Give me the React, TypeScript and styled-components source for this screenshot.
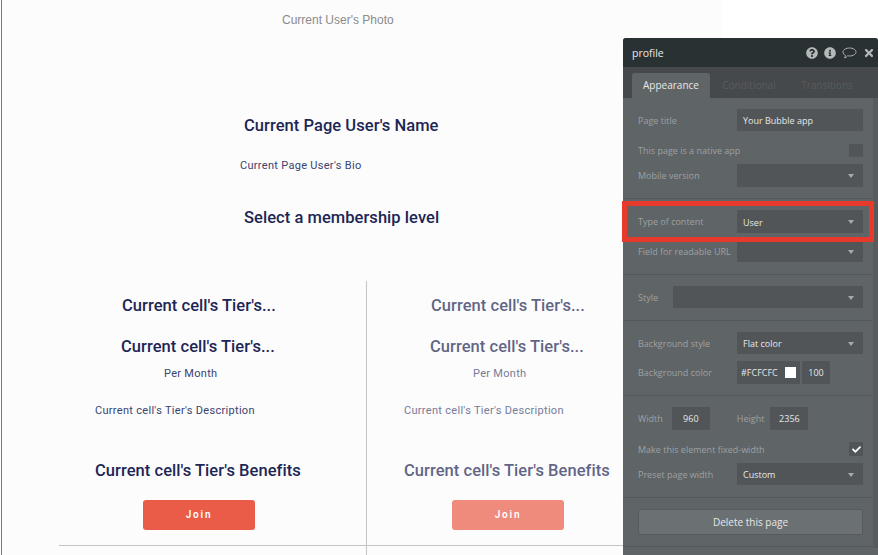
import React from "react";
import styled, { createGlobalStyle } from "styled-components";
import { FaQuestionCircle, FaInfoCircle, FaTimes, FaCheck } from "react-icons/fa";

const Global = createGlobalStyle`
  html, body { margin: 0; padding: 0; background: #fff; overflow: hidden; }
  #root { width: 878px; height: 555px; }
  * { box-sizing: border-box; }
`;

const Stage = styled.div`
  position: relative;
  width: 878px;
  height: 555px;
  overflow: hidden;
  background: #fff;
`;

const PageCanvas = styled.div`
  width: 721px;
  height: 555px;
  margin-left: 1px;
  background: #fcfcfc;
  border-left: 1px solid #3f82cf;
  font-family: "Roboto", "Liberation Sans", sans-serif;
  color: #1c2655;
`;

const Photo = styled.div`
  padding: 13px 0 0 280px;
  height: 116px;
  font: 12px/14px "Liberation Sans", sans-serif;
  color: #8b8b8b;
`;

const Heading = styled.div<{ $left: number; $top: number }>`
  margin: ${(p) => p.$top}px 0 0 ${(p) => p.$left}px;
  font-size: 16.5px;
  line-height: 20px;
  font-weight: 500;
  letter-spacing: 0.05px;
  white-space: nowrap;
`;

const Small = styled.div<{ $left: number; $top: number }>`
  margin: ${(p) => p.$top}px 0 0 ${(p) => p.$left}px;
  font-size: 11px;
  line-height: 14px;
  letter-spacing: 0.3px;
  color: #3a4370;
  white-space: nowrap;
`;

const Tiers = styled.div`
  display: grid;
  grid-template-columns: 308px 308px;
  margin: 53px 0 0 57px;
  height: 265px;
  border-bottom: 1px solid #c4c4c4;
  width: 670px;
`;

const Tier = styled.div<{ $faded?: boolean; $divider?: boolean }>`
  height: 290px;
  padding: 15px 0 0 ${(p) => (p.$faded ? 1 : 0)}px;
  border-right: ${(p) => (p.$divider ? "1px solid #c4c4c4" : "0")};
  & > * { opacity: ${(p) => (p.$faded ? 0.7 : 1)}; }
`;

const JoinButton = styled.button`
  display: block;
  margin: 19px 0 0 84px;
  width: 112px;
  height: 30px;
  border: 0;
  border-radius: 3px;
  background: #ea5c47;
  color: #fff;
  font: 600 10px/30px "Roboto", sans-serif;
  letter-spacing: 1.8px;
  padding: 0;
`;

const Panel = styled.aside`
  position: absolute;
  left: 623px;
  top: 38px;
  width: 255px;
  height: 517px;
  background: #5f6467;
  border-radius: 3px 3px 0 0;
  font-family: "Open Sans", "Noto Sans", sans-serif;
  font-size: 9px;
  color: #9da1a3;
  overflow: hidden;
`;

const TitleBar = styled.header`
  height: 29px;
  background: #2a3133;
  color: #e8e8e8;
  font-size: 10.5px;
  display: flex;
  align-items: center;
  justify-content: space-between;
  padding: 0 3px 0 9px;
`;

const TitleIcons = styled.div`
  display: flex;
  align-items: center;
  gap: 6px;
  color: #b5b8b9;
`;

const TabStrip = styled.nav`
  height: 31px;
  background: #45494c;
  padding: 6px 0 0 9px;
  display: flex;
  align-items: stretch;
`;

const Tab = styled.div<{ $active?: boolean }>`
  width: 78px;
  background: ${(p) => (p.$active ? "#5f6467" : "transparent")};
  border-radius: 3px 3px 0 0;
  color: ${(p) => (p.$active ? "#e8e9e9" : "#585c5f")};
  font-size: 10px;
  line-height: 25px;
  text-align: center;
`;

const Section = styled.section<{ $h: number; $line?: boolean }>`
  height: ${(p) => p.$h}px;
  padding: 11px 15px 0 15px;
  border-bottom: ${(p) => (p.$line ? "1px solid #54585b" : "0")};
`;

const Row = styled.div<{ $h?: number; $mb?: number }>`
  display: flex;
  align-items: center;
  justify-content: space-between;
  height: ${(p) => p.$h ?? 22}px;
  margin-bottom: ${(p) => p.$mb ?? 7}px;
  white-space: nowrap;
`;

const Control = styled.div<{ $w?: number }>`
  width: ${(p) => p.$w ?? 126}px;
  height: 100%;
  background: #515558;
  color: #e6e7e7;
  display: flex;
  align-items: center;
  justify-content: space-between;
  padding: 0 9px 0 6px;
`;

const Dropdown = styled(Control)`
  padding-top: 1px;
`;

const Caret = styled.span`
  width: 0;
  height: 0;
  border-left: 3.5px solid transparent;
  border-right: 3.5px solid transparent;
  border-top: 4px solid #a7aaac;
`;

const Box = styled.span`
  width: 14px;
  height: 100%;
  background: #515558;
  color: #fff;
  display: flex;
  align-items: center;
  justify-content: center;
`;

const Highlight = styled.div`
  position: absolute;
  left: 622px;
  top: 201px;
  width: 252px;
  height: 41px;
  border: 5px solid #e8392d;
  pointer-events: none;
`;

const Swatch = styled.span`
  width: 11px;
  height: 11px;
  background: #fff;
`;

const ColorGroup = styled.div`
  display: flex;
  height: 100%;
  gap: 2px;
  margin-right: 33px;
`;

const HexField = styled(Control)`
  width: 63px;
  padding: 0 4px 0 4px;
`;

const AlphaField = styled(Control)`
  width: 28px;
  justify-content: center;
  padding: 0;
`;

const SizeField = styled(Control)<{ $ml: number }>`
  width: 38px;
  justify-content: center;
  padding: 0;
  margin-left: ${(p) => p.$ml}px;
`;

const Pair = styled.div<{ $mr?: number }>`
  display: flex;
  align-items: center;
  height: 100%;
  margin-right: ${(p) => p.$mr ?? 0}px;
`;

const SizeRow = styled(Row)`
  justify-content: flex-start;
`;

const DeleteButton = styled.button`
  display: block;
  width: 225px;
  height: 26px;
  background: #6b7073;
  border: 1px solid #575b5e;
  border-radius: 2px;
  color: #e6e7e7;
  font: 10px "Open Sans", sans-serif;
  padding: 0;
`;

const RightRail = styled.div`
  position: absolute;
  right: 0;
  top: 60px;
  height: 450px;
  width: 5px;
  background: #575b5e;
`;

function CommentIcon() {
  return (
    <svg width="15" height="12" viewBox="0 0 15 12" fill="none" stroke="#b5b8b9" strokeWidth="0.9">
      <path d="M7.5 1C11 1 14 2.7 14 5s-3 4-6.5 4c-.7 0-1.3-.1-1.9-.2C4.8 9.8 3.8 10.6 2.6 11c.5-.8.8-1.6.8-2.6C2 7.7 1 6.5 1 5c0-2.3 3-4 6.5-4z" />
    </svg>
  );
}

function TierCard({ faded, divider }: { faded?: boolean; divider?: boolean }) {
  return (
    <Tier $faded={faded} $divider={divider}>
      <Heading $left={63} $top={0}>Current cell's Tier's...</Heading>
      <Heading $left={62} $top={21}>Current cell's Tier's...</Heading>
      <Small $left={105} $top={10}>Per Month</Small>
      <Small $left={36} $top={23}>Current cell's Tier's Description</Small>
      <Heading $left={36} $top={43}>Current cell's Tier's Benefits</Heading>
      <JoinButton>Join</JoinButton>
    </Tier>
  );
}

export default function App() {
  return (
    <Stage>
      <Global />
      <PageCanvas>
        <Photo>Current User's Photo</Photo>
        <Heading $left={242} $top={0}>Current Page User's Name</Heading>
        <Small $left={238} $top={23}>Current Page User's Bio</Small>
        <Heading $left={242} $top={35}>Select a membership level</Heading>
        <Tiers>
          <TierCard divider />
          <TierCard faded />
        </Tiers>
      </PageCanvas>
      <Panel>
        <TitleBar>
          profile
          <TitleIcons>
            <FaQuestionCircle size={12} />
            <FaInfoCircle size={12} />
            <CommentIcon />
            <FaTimes size={12} />
          </TitleIcons>
        </TitleBar>
        <TabStrip>
          <Tab $active>Appearance</Tab>
          <Tab>Conditional</Tab>
          <Tab>Transitions</Tab>
        </TabStrip>
        <RightRail />
        <Section $h={101} $line>
          <Row $mb={13}>Page title<Control>Your Bubble app</Control></Row>
          <Row $h={13}>This page is a native app<Box /></Row>
          <Row $h={23}>Mobile version<Dropdown><span /><Caret /></Dropdown></Row>
        </Section>
        <Section $h={76} $line>
          <Row $h={23}>Type of content<Dropdown>User<Caret /></Dropdown></Row>
          <Row>Field for readable URL<Dropdown><span /><Caret /></Dropdown></Row>
        </Section>
        <Section $h={46} $line>
          <Row>Style<Dropdown $w={190}><span /><Caret /></Dropdown></Row>
        </Section>
        <Section $h={75} $line>
          <Row>Background style<Dropdown>Flat color<Caret /></Dropdown></Row>
          <Row $h={23}>Background color
            <ColorGroup>
              <HexField>#FCFCFC<Swatch /></HexField>
              <AlphaField>100</AlphaField>
            </ColorGroup>
          </Row>
        </Section>
        <Section $h={102} $line>
          <SizeRow $h={23} $mb={12}>
            <Pair $mr={27}>Width<SizeField $ml={9}>960</SizeField></Pair>
            <Pair>Height<SizeField $ml={6}>2356</SizeField></Pair>
          </SizeRow>
          <Row $h={14}>Make this element fixed-width<Box><FaCheck size={9} /></Box></Row>
          <Row>Preset page width<Dropdown>Custom<Caret /></Dropdown></Row>
        </Section>
        <Section $h={49} $line>
          <DeleteButton>Delete this page</DeleteButton>
        </Section>
      </Panel>
      <Highlight />
    </Stage>
  );
}
